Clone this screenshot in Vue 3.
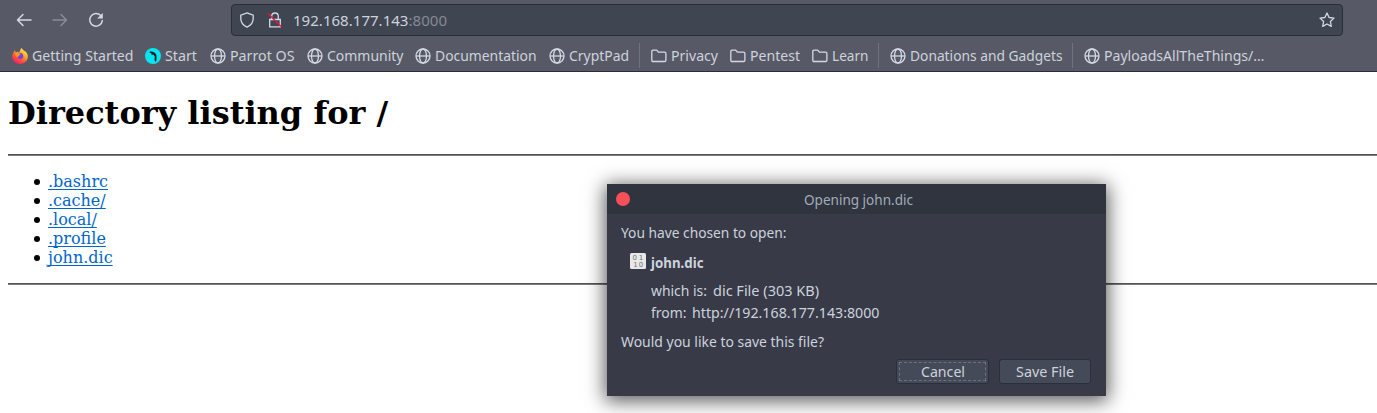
<script setup>
const bookmarks = [
  { label: 'Getting Started', icon: 'firefox', slot: 133, width: 101.5 },
  { label: 'Start', icon: 'start', slot: 65, width: 32 },
  { label: 'Parrot OS', icon: 'globe', slot: 97, width: 64.5 },
  { label: 'Community', icon: 'globe', slot: 108, width: 76.5 },
  { label: 'Documentation', icon: 'globe', slot: 134, width: 101.5 },
  { label: 'CryptPad', icon: 'globe', slot: 90, width: 60 },
  { label: 'Privacy', icon: 'folder', slot: 79, width: 47, divider: true },
  { label: 'Pentest', icon: 'folder', slot: 82, width: 50 },
  { label: 'Learn', icon: 'folder', slot: 66, width: 36.5 },
  { label: 'Donations and Gadgets', icon: 'globe', slot: 182, width: 152.5, divider: true },
  { label: 'PayloadsAllTheThings/…', icon: 'globe', slot: 190, width: 160.5, divider: true },
]
const files = ['.bashrc', '.cache/', '.local/', '.profile', 'john.dic']

// Condenses a label horizontally so that it fills exactly the given width.
const vFit = {
  mounted(el, { value }) {
    const natural = el.getBoundingClientRect().width
    el.style.transform = `scaleX(${value / natural})`
    el.style.marginRight = `${value - natural}px`
  },
}
</script>

<template>
  <div class="window">
    <header class="chrome">
      <div class="toolbar">
        <svg class="tool back" viewBox="0 0 16 16"><path d="M15 8H1.8M7 2.5 1.5 8 7 13.5" /></svg>
        <svg class="tool forward" viewBox="0 0 16 16"><path d="M1 8h13.2M9 2.5 14.5 8 9 13.5" /></svg>
        <svg class="tool reload" viewBox="0 0 16 16"><path d="M12.7 3.6A6.3 6.3 0 1 0 14.3 8.6" /><path class="solid" d="M14.8 1v5.6H9.2z" /></svg>
        <div class="urlbar">
          <svg class="shield" viewBox="0 0 16 16"><path d="M8 .9 14.2 3.2v3.3c0 3.8-2.1 6.8-6.2 8.7C3.9 13.3 1.8 10.3 1.8 6.5V3.2z" /></svg>
          <svg class="lock" viewBox="0 0 16 16"><path d="M4.7 7.3V4.3a3.3 3.3 0 0 1 6.6 0v3M2.7 7.5h10.6v7.3H2.7z" /><path class="slash" d="M1 1.5 14.7 15" /></svg>
          <span class="address"><span v-fit="154"><span>192.168.177.143</span><span class="port">:8000</span></span></span>
          <svg class="star" viewBox="0 0 16 16"><path d="m8 1 2.1 4.5 4.9.6-3.6 3.4.9 4.9L8 12l-4.3 2.4.9-4.900L1 6.1l4.9-.6z" /></svg>
        </div>
      </div>
      <nav class="bookmarks">
        <template v-for="b in bookmarks" :key="b.label">
          <i v-if="b.divider" class="divider"></i>
          <a class="bookmark" :style="{ width: b.slot + 'px' }">
            <svg v-if="b.icon === 'globe'" class="icon" viewBox="0 0 16 16"><circle cx="8" cy="8" r="7" /><ellipse cx="8" cy="8" rx="3.5" ry="7" /><path d="M1 8h14" /></svg>
            <svg v-else-if="b.icon === 'folder'" class="icon" viewBox="0 0 16 16"><path d="M.8 12.2V3.5q0-1.3 1.3-1.3h3.2q.7 0 1.1.6l1 1.3h6.2q1.3 0 1.3 1.3v6.8q0 1.3-1.3 1.3H2.1q-1.3 0-1.3-1.3z" /></svg>
            <svg v-else-if="b.icon === 'start'" class="icon start" viewBox="0 0 16 16"><circle cx="8" cy="8" r="8" /><path d="M4 4C6.500 2.900 9.500 3.700 10.800 6c1 1.800 1.100 4.500.2 8L9.400 12l.4-3.500-1.400-2.100-1.700.5-.2-1.500z" /></svg>
            <svg v-else class="icon firefox" viewBox="0 0 16 16">
              <defs>
                <linearGradient id="flame" x1=".85" y1="0" x2=".2" y2="1">
                  <stop offset="0" stop-color="#fff44f" /><stop offset=".35" stop-color="#ffb129" /><stop offset=".65" stop-color="#ff5634" /><stop offset="1" stop-color="#f0147a" />
                </linearGradient>
              </defs>
              <path fill="url(#flame)" d="M1.3 5 2.7 2.2l1 2 2.2-.4L7 4.9 9.2 0c1.3 1 2.2 1.9 3 3.3l.5-.6C15 4.6 15.8 6.4 15.8 8.5c0 4.3-3.4 7.4-7.8 7.4S.2 12.6.2 8.4C.2 7 .5 6.1 1.3 5z" />
              <circle cx="8.4" cy="8" r="2.9" fill="#7542e5" />
              <path fill="#ff9728" d="M3.2 5.2 6.5 4.8 8.7 6.5 7 7.4l-1 1.5-2.4-.6z" />
            </svg>
            <span v-fit="b.width">{{ b.label }}</span>
          </a>
        </template>
      </nav>
    </header>

    <main class="page">
      <h1>Directory listing for /</h1>
      <hr />
      <ul>
        <li v-for="f in files" :key="f"><a>{{ f }}</a></li>
      </ul>
      <hr />
    </main>

    <section class="dialog">
      <div class="titlebar"><i class="close"></i><span v-fit="109">Opening john.dic</span></div>
      <div class="content">
        <p><span v-fit="165.5">You have chosen to open:</span></p>
        <div class="file">
          <svg class="binary" viewBox="0 0 16 16"><rect width="16" height="16" rx="1.5" /><text x="2.6" y="7">0</text><text x="8.8" y="7">1</text><text x="3.2" y="14">1</text><text x="8.7" y="14">0</text></svg>
          <strong v-fit="52.5">john.dic</strong>
        </div>
        <p class="detail kind"><span v-fit="56">which is:</span><span v-fit="106">dic File (303 KB)</span></p>
        <p class="detail origin"><span v-fit="35.5">from:</span><span v-fit="187.5">http://192.168.177.143:8000</span></p>
        <p class="question"><span v-fit="203">Would you like to save this file?</span></p>
        <div class="actions">
          <button class="focused"><span v-fit="44">Cancel</span></button>
          <button><span v-fit="58">Save File</span></button>
        </div>
      </div>
    </section>
  </div>
</template>

<style>
body { margin: 0; background: #fff; overflow: hidden; }
</style>

<style scoped>
.window { position: relative; width: 1377px; height: 413px; overflow: hidden; font: 15px "Noto Sans", sans-serif; }
.window span, .window strong { white-space: nowrap; }
.bookmark span, .address > span, .titlebar span, .content span, .file strong { display: inline-block; transform-origin: 0 50%; }
.chrome { box-sizing: border-box; height: 72px; background: #585966; border-bottom: 1px solid #2b2c3a; color: #ccd3dc; }
.toolbar { display: flex; align-items: center; height: 40px; padding-left: 16px; }
svg { flex: none; fill: none; stroke: #d3dae3; stroke-width: 1.3; }
.tool { width: 16px; height: 16px; margin-right: 20px; stroke-width: 1.5; stroke-linecap: round; stroke-linejoin: round; }
.forward { opacity: .4; }
.reload .solid { fill: #d3dae3; stroke: none; }
.urlbar { box-sizing: border-box; display: flex; align-items: center; width: 1112px; height: 32px; margin-left: 107px; padding: 0 7px; background: #404552; border: 1px solid #2b2e39; border-radius: 4px; }
.shield { width: 16px; height: 16px; }
.lock { width: 16px; height: 16px; margin-left: 12px; }
.lock .slash { stroke: #e8173f; stroke-width: 1.4; }
.address { margin-left: 9.5px; flex: 1; }
.address .port { color: #858a95; }
.star { width: 16px; height: 16px; stroke-linejoin: round; }
.bookmarks { display: flex; align-items: center; height: 31px; padding-left: 12px; }
.bookmark { display: flex; align-items: center; flex: none; height: 22px; line-height: 20px; white-space: nowrap; }
.bookmark span { height: 22px; }
.divider { flex: none; width: 1px; height: 25px; margin: 0 11px 0 0; background: #70727e; }
.icon { width: 16px; height: 16px; margin-right: 3.5px; }
.start { stroke: none; }
.start circle { fill: #05e5f3; }
.start path { fill: #071b20; }
.firefox { stroke: none; }
.page { padding-left: 8px; font-family: "DejaVu Serif", serif; font-size: 16px; color: #000; }
h1 { margin: 0; padding-top: 23px; height: 59px; font-size: 32px; line-height: 37px; }
hr { box-sizing: border-box; height: 2px; margin: 0; border: 0; border-top: 1px solid #555; background: #7b7b7b; }
ul { margin: 16px 0; padding-left: 26px; line-height: 19px; list-style: none; }
li { display: flex; align-items: center; }
li::before { content: ""; width: 6px; height: 6px; margin: 0 8px 0 0; border-radius: 50%; background: #000; }
li a { color: #0066cc; text-decoration: underline; text-underline-offset: 2px; text-decoration-skip-ink: none; }
.dialog { position: absolute; left: 607px; top: 184px; width: 499px; height: 212px; background: #383a48; color: #ccd3dc; box-shadow: 0 3px 18px 2px rgba(0, 0, 0, .65); }
.titlebar { display: flex; align-items: center; height: 30px; padding-left: 9px; background: #2f343f; color: #a4abb8; }
.close { width: 14px; height: 14px; margin-right: 174px; border-radius: 50%; background: #f94f58; }
.content { padding: 7px 15px 0 14px; }
.content p { margin: 0; height: 22px; line-height: 22px; }
.file { display: flex; align-items: center; height: 22px; margin: 8px 0 6px 9px; }
.binary { width: 16px; height: 16px; margin: -3px 5px 0 0; stroke: none; }
.binary rect { fill: #e8e8e8; }
.binary text { font: 7px "DejaVu Sans", sans-serif; fill: #737373; }
.detail { display: flex; gap: 5.5px; padding-left: 30px; }
.question { padding-top: 7px; }
.actions { display: flex; justify-content: flex-end; gap: 10px; margin-top: 7px; }
button { box-sizing: border-box; width: 92.5px; height: 25px; padding: 0 0 1px 1px; display: flex; align-items: center; justify-content: center; font: inherit; color: inherit; background: #444a58; border: 1px solid #2b2e3b; border-radius: 3px; }
.focused { outline: 1px dashed #6b717e; outline-offset: -4px; }
</style>
